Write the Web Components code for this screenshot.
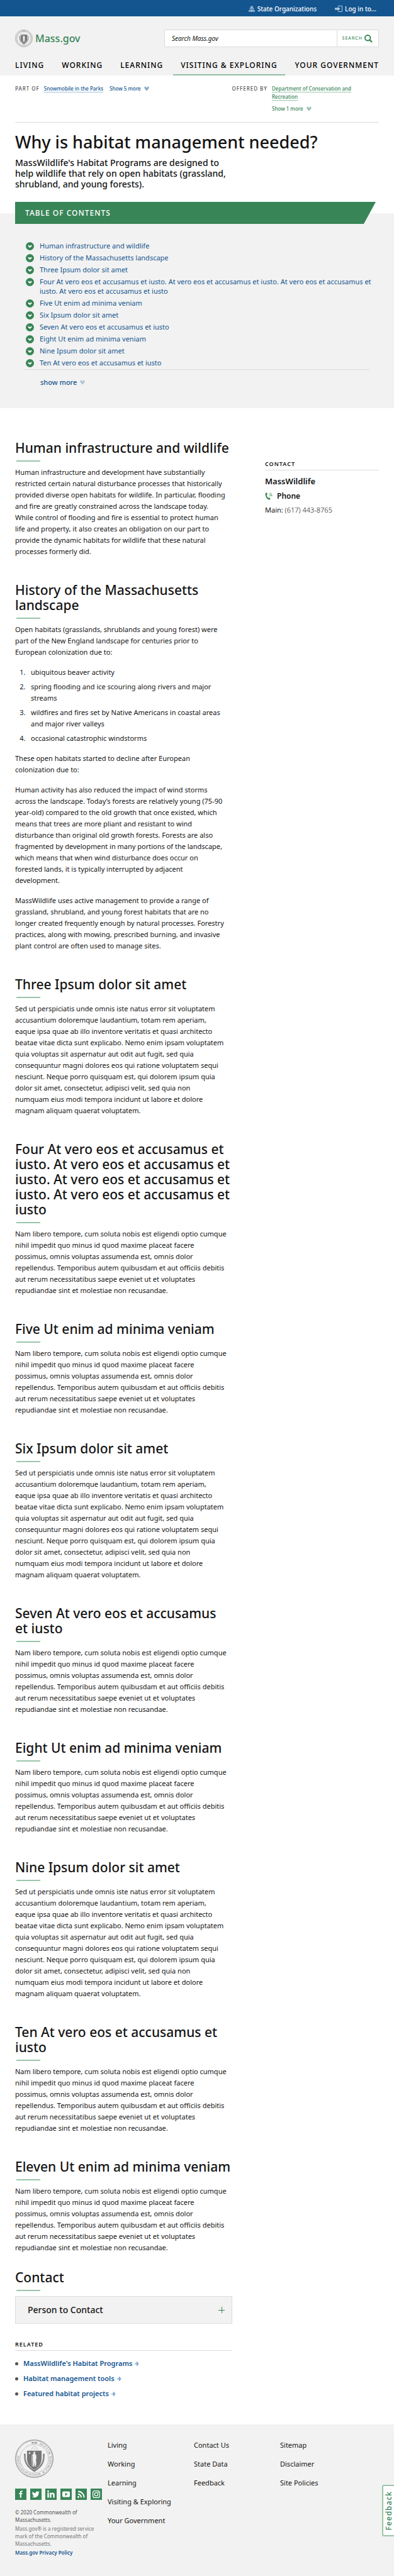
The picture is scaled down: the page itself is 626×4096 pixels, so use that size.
<!DOCTYPE html>
<html lang="en">
<head>
<meta charset="utf-8">
<meta name="viewport" content="width=device-width, initial-scale=1">
<title>Why is habitat management needed? | Mass.gov</title>
<style>
:root {
  --blue: #14558f; --green: #388557; --green-light: #9bc5ab; --ink: #141414;
  --grey: #f2f2f2; --line: #dcdcdc; --muted: #535353; --gutter: 24px;
}
body { display: flex; flex-direction: column; min-height: 100vh; margin: 0; background: #fff; color: var(--ink); font: 11px/18px "Noto Sans", "Open Sans", sans-serif; }
mg-footer { flex: 1; }
p { margin: 0 0 14px; }
p:last-child { margin-bottom: 0; }
ol { margin: 0 0 14px; padding-left: 25px; display: grid; gap: 5px; }
ol li::marker { content: counter(list-item) ".\00a0\00a0\00a0"; }
</style>
</head>
<body>
<mg-topbar></mg-topbar>
<mg-header></mg-header>
<mg-relations></mg-relations>
<mg-page-title>
  Why is habitat management needed?
  <span slot="intro">MassWildlife's Habitat Programs are designed to help wildlife that rely on open habitats (grassland, shrubland, and young forests).</span>
</mg-page-title>
<mg-toc></mg-toc>
<mg-columns>
  <mg-section heading="Human infrastructure and wildlife">
    <p>Human infrastructure and development have substantially restricted certain natural disturbance processes that historically provided diverse open habitats for wildlife. In particular, flooding and fire are greatly constrained across the landscape today. While control of flooding and fire is essential to protect human life and property, it also creates an obligation on our part to provide the dynamic habitats for wildlife that these natural processes formerly did.</p>
  </mg-section>
  <mg-section heading="History of the Massachusetts landscape">
    <p>Open habitats (grasslands, shrublands and young forest) were part of the New England landscape for centuries prior to European colonization due to:</p>
    <ol>
      <li>ubiquitous beaver activity</li>
      <li>spring flooding and ice scouring along rivers and major streams</li>
      <li>wildfires and fires set by Native Americans in coastal areas and major river valleys</li>
      <li>occasional catastrophic windstorms</li>
    </ol>
    <p>These open habitats started to decline after European colonization due to:</p>
    <p>Human activity has also reduced the impact of wind storms across the landscape. Today’s forests are relatively young (75-90 year-old) compared to the old growth that once existed, which means that trees are more pliant and resistant to wind disturbance than original old growth forests. Forests are also fragmented by development in many portions of the landscape, which means that when wind disturbance does occur on forested lands, it is typically interrupted by adjacent development.</p>
    <p>MassWildlife uses active management to provide a range of grassland, shrubland, and young forest habitats that are no longer created frequently enough by natural processes. Forestry practices, along with mowing, prescribed burning, and invasive plant control are often used to manage sites.</p>
  </mg-section>
  <mg-section heading="Three Ipsum dolor sit amet">
    <p>Sed ut perspiciatis unde omnis iste natus error sit voluptatem accusantium doloremque laudantium, totam rem aperiam, eaque ipsa quae ab illo inventore veritatis et quasi architecto beatae vitae dicta sunt explicabo. Nemo enim ipsam voluptatem quia voluptas sit aspernatur aut odit aut fugit, sed quia consequuntur magni dolores eos qui ratione voluptatem sequi nesciunt. Neque porro quisquam est, qui dolorem ipsum quia dolor sit amet, consectetur, adipisci velit, sed quia non numquam&nbsp;eius modi tempora incidunt ut labore et dolore magnam aliquam quaerat voluptatem.</p>
  </mg-section>
  <mg-section heading="Four At vero eos et accusamus et iusto. At vero eos et accusamus et iusto. At vero eos et accusamus et iusto. At vero eos et accusamus et iusto">
    <p>Nam libero tempore, cum soluta nobis est eligendi optio cumque nihil impedit quo minus id quod maxime placeat facere possimus, omnis voluptas assumenda est, omnis dolor repellendus. Temporibus autem quibusdam et aut officiis debitis aut rerum necessitatibus saepe eveniet ut et voluptates repudiandae sint et molestiae non recusandae.</p>
  </mg-section>
  <mg-section heading="Five Ut enim ad minima veniam">
    <p>Nam libero tempore, cum soluta nobis est eligendi optio cumque nihil impedit quo minus id quod maxime placeat facere possimus, omnis voluptas assumenda est, omnis dolor repellendus. Temporibus autem quibusdam et aut officiis debitis aut rerum necessitatibus saepe eveniet ut et voluptates repudiandae sint et molestiae non recusandae.</p>
  </mg-section>
  <mg-section heading="Six Ipsum dolor sit amet">
    <p>Sed ut perspiciatis unde omnis iste natus error sit voluptatem accusantium doloremque laudantium, totam rem aperiam, eaque ipsa quae ab illo inventore veritatis et quasi architecto beatae vitae dicta sunt explicabo. Nemo enim ipsam voluptatem quia voluptas sit aspernatur aut odit aut fugit, sed quia consequuntur magni dolores eos qui ratione voluptatem sequi nesciunt. Neque porro quisquam est, qui dolorem ipsum quia dolor sit amet, consectetur, adipisci velit, sed quia non numquam&nbsp;eius modi tempora incidunt ut labore et dolore magnam aliquam quaerat voluptatem.</p>
  </mg-section>
  <mg-section heading="Seven At vero eos et accusamus et iusto">
    <p>Nam libero tempore, cum soluta nobis est eligendi optio cumque nihil impedit quo minus id quod maxime placeat facere possimus, omnis voluptas assumenda est, omnis dolor repellendus. Temporibus autem quibusdam et aut officiis debitis aut rerum necessitatibus saepe eveniet ut et voluptates repudiandae sint et molestiae non recusandae.</p>
  </mg-section>
  <mg-section heading="Eight Ut enim ad minima veniam">
    <p>Nam libero tempore, cum soluta nobis est eligendi optio cumque nihil impedit quo minus id quod maxime placeat facere possimus, omnis voluptas assumenda est, omnis dolor repellendus. Temporibus autem quibusdam et aut officiis debitis aut rerum necessitatibus saepe eveniet ut et voluptates repudiandae sint et molestiae non recusandae.</p>
  </mg-section>
  <mg-section heading="Nine Ipsum dolor sit amet">
    <p>Sed ut perspiciatis unde omnis iste natus error sit voluptatem accusantium doloremque laudantium, totam rem aperiam, eaque ipsa quae ab illo inventore veritatis et quasi architecto beatae vitae dicta sunt explicabo. Nemo enim ipsam voluptatem quia voluptas sit aspernatur aut odit aut fugit, sed quia consequuntur magni dolores eos qui ratione voluptatem sequi nesciunt. Neque porro quisquam est, qui dolorem ipsum quia dolor sit amet, consectetur, adipisci velit, sed quia non numquam&nbsp;eius modi tempora incidunt ut labore et dolore magnam aliquam quaerat voluptatem.</p>
  </mg-section>
  <mg-section heading="Ten At vero eos et accusamus et iusto">
    <p>Nam libero tempore, cum soluta nobis est eligendi optio cumque nihil impedit quo minus id quod maxime placeat facere possimus, omnis voluptas assumenda est, omnis dolor repellendus. Temporibus autem quibusdam et aut officiis debitis aut rerum necessitatibus saepe eveniet ut et voluptates repudiandae sint et molestiae non recusandae.</p>
  </mg-section>
  <mg-section heading="Eleven Ut enim ad minima veniam">
    <p>Nam libero tempore, cum soluta nobis est eligendi optio cumque nihil impedit quo minus id quod maxime placeat facere possimus, omnis voluptas assumenda est, omnis dolor repellendus. Temporibus autem quibusdam et aut officiis debitis aut rerum necessitatibus saepe eveniet ut et voluptates repudiandae sint et molestiae non recusandae.</p>
  </mg-section>
  <mg-section heading="Contact" compact>
    <mg-accordion>Person to Contact</mg-accordion>
  </mg-section>
  <mg-related></mg-related>
  <mg-contact slot="aside"></mg-contact>
</mg-columns>
<mg-footer></mg-footer>

<script>
const define = (name, html) => {
  const template = document.createElement('template');
  template.innerHTML = `<style>
    * { box-sizing: border-box; }
    a { color: inherit; text-decoration: none; }
    button { font: inherit; color: inherit; background: none; border: 0; padding: 0; margin: 0; cursor: pointer; }
    ul { list-style: none; margin: 0; padding: 0; }
    svg { display: block; flex: none; }
  </style>` + html;
  customElements.define(name, class extends HTMLElement {
    constructor() {
      super();
      this.attachShadow({ mode: 'open' }).append(template.content.cloneNode(true));
      const heading = this.shadowRoot.querySelector('[data-heading]');
      if (heading) heading.textContent = this.getAttribute('heading');
    }
  });
};

const chevron = '<svg width="8" height="8" viewBox="0 0 8 8" fill="currentColor" aria-hidden="true"><path d="M.5 1 2.2.4 4 3 5.800.4 7.500 1V3.200L4 7.800.5 3.200Z"/></svg>';

define('mg-seal', `
<style>
  :host { display: block; color: #777; }
  svg { width: 100%; height: auto; }
  text { font: 8px "Liberation Serif", serif; fill: currentColor; stroke: none; }
  .marks { display: none; }
  :host([small]) text { display: none; }
  :host([small]) .marks { display: inline; }
</style>
<svg viewBox="0 0 100 100" fill="none" stroke="currentColor" role="img" aria-label="Seal of the Commonwealth of Massachusetts">
  <defs><path id="ring" d="M50 10.500A39.500 39.500 0 0 1 50 89.500 39.500 39.500 0 0 1 50 10.500"/></defs>
  <circle cx="50" cy="50" r="49" stroke-width="1.400"/>
  <circle cx="50" cy="50" r="47" stroke-width=".6"/>
  <circle cx="50" cy="50" r="37" stroke-width="1.200" stroke-dasharray="1 .7"/>
  <circle class="marks" cx="50" cy="50" r="42" stroke-width="5" stroke-dasharray="2 1.600" opacity=".6"/>
  <text><textPath href="#ring" startOffset="13">SIGILLUM&#160; REIPUBLICÆ&#160; MASSACHUSETTENSIS.</textPath></text>
  <path d="M41 8.500 47 6.500v4ZM59 8.500 53 6.500v4Z" fill="currentColor" stroke="none"/>
  <circle cx="50" cy="8.500" r="2" stroke-width="1"/>
  <path d="M43 27c1-6 4-10 7-9 4 1 8 4 9 9M47 23l4 2 5-1" stroke-width="1" opacity=".5"/>
  <path d="M31 29H69V50C69 64 60 73 50 79 40 73 31 64 31 50Z" fill="currentColor" stroke="none"/>
  <path d="M25 37C26 45 24 54 30 63 35 73 43 77 50 82 57 77 65 73 70 63 76 54 74 45 75 37" stroke-width="4"/>
  <path d="M25 42C26 50 26 56 31 63 36 71 43 75 50 79.500 57 75 64 71 69 63 74 56 74 50 75 42" stroke="#f2f2f2" stroke-width="1" stroke-dasharray="1 1"/>
  <path d="m37.500 32 .9 2.200 2.300.1-1.800 1.500.7 2.300-2.100-1.300-2 1.300.7-2.300-1.900-1.500 2.400-.1Z" fill="#f2f2f2" stroke="none"/>
  <path d="M48 34c1-3 4-3 4 0v4l3 3v9l-1 3 1 8-1 9h-2l-1-11-2 11h-3l1-10-1-9v-6l-1-5 3-3ZM43 40c2 8 2 20 1 30" fill="#f2f2f2" stroke="#f2f2f2" stroke-width=".5"/>
</svg>`);

define('mg-topbar', `
<style>
  :host { display: block; background: var(--blue); color: #fff; font-size: 10px; line-height: 16px; font-weight: 500; }
  nav { display: flex; justify-content: flex-end; gap: 29px; padding: 6px 28px 4px var(--gutter); }
  button { display: flex; align-items: center; gap: 4px; }
  svg { color: #b3cbe0; }
</style>
<nav aria-label="State">
  <button type="button"><svg width="10" height="10" viewBox="0 0 20 20" fill="currentColor" aria-hidden="true"><path d="M9.300 0h1.400v2C13 2.500 15 4.500 15 7H5c0-2.500 2-4.500 4.300-5ZM3 8h14v1.500H3ZM4 10.500h2v3h2v-3h3v3h2v-3h3v3H4ZM0 14.500h20V20h-1.500v-3h-2v3h-2v-3h-2v3h-5v-3h-2v3h-2v-3h-2v3H0Z"/></svg>State Organizations</button>
  <button type="button"><svg width="12" height="10" viewBox="0 0 24 20" aria-hidden="true"><path d="M10 1H23V19H10" fill="none" stroke="currentColor" stroke-width="2"/><path d="M0 7h9V3l8 7-8 7v-4H0Z" fill="currentColor"/></svg>Log in to...</button>
</nav>`);

define('mg-header', `
<style>
  :host { display: block; background: var(--grey); }
  .brand-row { display: flex; justify-content: space-between; align-items: center; padding: 21px var(--gutter) 0; }
  .brand { display: flex; align-items: center; gap: 4px; color: var(--green); font-size: 16px; line-height: 28px; font-weight: 500; }
  mg-seal { width: 28px; }
  form { display: flex; width: 59%; height: 28px; border: 1px solid var(--line); background: #fff; }
  input { flex: 1; min-width: 0; border: 0; padding: 0 11px; background: none; color: var(--ink); font: italic 10px/16px "Noto Sans", sans-serif; }
  input::placeholder { color: var(--ink); opacity: 1; }
  form button { display: flex; align-items: center; gap: 3px; padding: 0 9px 0 8px; border-left: 1px solid var(--line); color: var(--green); font-size: 7px; font-weight: 500; letter-spacing: 1px; }
  nav ul { display: flex; justify-content: space-between; padding: 21px var(--gutter) 0; font-size: 12px; line-height: 16px; font-weight: 500; letter-spacing: 1px; text-transform: uppercase; color: #000; }
  nav li { position: relative; padding-bottom: 8px; white-space: nowrap; }
  .active::after { content: ""; position: absolute; left: -12px; right: -12px; bottom: 0; height: 2px; background: #92bda3; }
</style>
<header>
  <div class="brand-row">
    <a class="brand" href="#"><mg-seal small></mg-seal>Mass.gov</a>
    <form role="search"><input type="text" placeholder="Search Mass.gov" aria-label="Search Mass.gov"><button type="button">SEARCH<svg width="13" height="13" viewBox="0 0 20 20" fill="none" stroke="currentColor" aria-hidden="true"><circle cx="8" cy="8" r="6.500" stroke-width="3"/><path d="m12.500 12.500 6 6" stroke-width="3.500"/></svg></button></form>
  </div>
  <nav aria-label="Main"><ul>
    <li><a href="#">Living</a></li><li><a href="#">Working</a></li><li><a href="#">Learning</a></li>
    <li class="active"><a href="#">Visiting &amp; Exploring</a></li><li><a href="#">Your Government</a></li>
  </ul></nav>
</header>`);

define('mg-relations', `
<style>
  :host { display: block; padding: 0 var(--gutter); font-size: 8px; line-height: 13px; font-weight: 500; }
  .row { display: flex; justify-content: space-between; padding: 14px 0 15px; border-bottom: 1px solid var(--line); }
  .group { display: flex; gap: 7px; }
  .group > span { letter-spacing: 1px; color: var(--muted); white-space: nowrap; }
  .part { color: var(--blue); display: flex; gap: 10px; }
  .by { color: var(--green); width: 170px; display: grid; gap: 6px; justify-items: start; align-content: start; }
  a { text-decoration: underline; text-decoration-color: var(--rule); text-underline-offset: 2px; text-decoration-thickness: 1px; }
  .part a { --rule: #9fbfdb; }
  .by a { --rule: var(--green-light); padding-right: 28px; }
  button { display: flex; align-items: center; gap: 5px; height: 13px; }
  svg { opacity: .5; }
</style>
<div class="row">
  <div class="group"><span>PART OF</span><div class="part"><a href="#">Snowmobile in the Parks</a><button type="button">Show 5 more ${chevron}</button></div></div>
  <div class="group"><span>OFFERED BY</span><div class="by"><a href="#">Department of Conservation and Recreation</a><button type="button">Show 1 more ${chevron}</button></div></div>
</div>`);

define('mg-page-title', `
<style>
  :host { display: block; padding: 14px var(--gutter) 20px; font-weight: 500; }
  h1 { margin: 0 0 7px; font-size: 27px; line-height: 34px; font-weight: 500; }
  p { margin: 0; max-width: 60%; font-size: 14px; line-height: 17px; }
</style>
<h1><slot></slot></h1><p><slot name="intro"></slot></p>`);

const tocItems = ['Human infrastructure and wildlife', 'History of the Massachusetts landscape', 'Three Ipsum dolor sit amet',
  'Four At vero eos et accusamus et iusto. At vero eos et accusamus et iusto. At vero eos et accusamus et iusto. At vero eos et accusamus et iusto',
  'Five Ut enim ad minima veniam', 'Six Ipsum dolor sit amet', 'Seven At vero eos et accusamus et iusto', 'Eight Ut enim ad minima veniam',
  'Nine Ipsum dolor sit amet', 'Ten At vero eos et accusamus et iusto'];
const dot = '<svg width="13" height="13" viewBox="0 0 26 26" aria-hidden="true"><circle cx="13" cy="13" r="13" fill="#388557"/><path d="m7.500 10.500 2-1.500 3.500 4 3.500-4 2 1.500v3L13 18l-5.500-4.500Z" fill="#fff"/></svg>';
define('mg-toc', `
<style>
  :host { display: block; padding: 0 var(--gutter) 34px; background: linear-gradient(#fff 18px, var(--grey) 18px); color: var(--blue); line-height: 15px; }
  h2 { margin: 0 5px 27px 0; padding-left: 16px; background: var(--green); color: #fff; font-size: 12px; line-height: 35px; font-weight: 500; letter-spacing: 1px; clip-path: polygon(0 0, 100% 0, calc(100% - 19px) 100%, 0 100%); }
  ul { display: grid; gap: 4px; padding-left: 17px; }
  li { display: flex; gap: 9px; }
  li svg { margin-top: 2px; }
  .more { margin: 3px 15px 0; padding: 12px 0 0 25px; border-top: 1px solid var(--line); }
  button { display: flex; align-items: center; gap: 5px; font-weight: 500; }
  button svg { opacity: .3; }
</style>
<h2>TABLE OF CONTENTS</h2>
<ul>${tocItems.map(t => `<li>${dot}<a href="#">${t}</a></li>`).join('')}</ul>
<div class="more"><button type="button">show more ${chevron}</button></div>`);

define('mg-columns', `
<style>
  :host { display: grid; grid-template-columns: 345fr 181fr; column-gap: 52px; padding: 51px var(--gutter) 40px; }
  aside { padding-top: 32px; }
</style>
<main><slot></slot></main><aside><slot name="aside"></slot></aside>`);

define('mg-section', `
<style>
  :host { display: block; margin-bottom: 40px; }
  :host([compact]) { margin: -14px 0 27px; }
  h2 { margin: 0; padding-right: 2px; font-size: 21px; line-height: 24px; font-weight: 500; }
  hr { width: 38px; height: 2px; margin: 8px 0 8px 2px; border: 0; background: var(--green-light); transform: skewX(-30deg); }
  .body { padding-right: 9px; }
  :host([compact]) .body { padding-right: 0; }
</style>
<h2 data-heading></h2><hr><div class="body"><slot></slot></div>`);

define('mg-accordion', `
<style>
  :host { display: block; }
  h3 { margin: 0; }
  button { display: flex; justify-content: space-between; align-items: center; width: 100%; height: 44px; padding: 0 11px 0 19px; border: 1px solid var(--line); background: var(--grey); font-size: 14px; line-height: 18px; font-weight: 500; }
</style>
<h3><button type="button" aria-expanded="false"><slot></slot><svg width="10" height="10" viewBox="0 0 10 10" stroke="#388557" aria-hidden="true"><path d="M0 5.500H10M5.500 0V10"/></svg></button></h3>`);

define('mg-label', `
<style>
  :host { display: block; padding-bottom: 3px; border-bottom: 1px solid var(--line); }
  h2 { margin: 0; font-size: 9px; line-height: 12px; font-weight: 600; letter-spacing: 1px; }
</style><h2><slot></slot></h2>`);

const arrow = '<svg width="7" height="7" viewBox="0 0 14 14" fill="#7fa6c9" aria-hidden="true"><path d="M0 5.500h7L5 2l2-2h1l5 7-5 7H7l-2-2 2-3.500H0Z"/></svg>';
define('mg-related', `
<style>
  :host { display: block; }
  ul { display: grid; gap: 6px; margin-top: 11px; }
  li { display: flex; align-items: center; gap: 8px; font-weight: 600; color: var(--blue); }
  li::before { content: ""; width: 5px; height: 5px; border-radius: 50%; background: var(--muted); }
  a { display: flex; align-items: center; gap: 4px; }
</style>
<mg-label>RELATED</mg-label>
<ul><li><a href="#">MassWildlife's Habitat Programs${arrow}</a></li><li><a href="#">Habitat management tools${arrow}</a></li><li><a href="#">Featured habitat projects${arrow}</a></li></ul>`);

define('mg-contact', `
<style>
  :host { display: block; }
  h3, h4, p { margin: 0; }
  h3 { margin-top: 8px; font-size: 13px; line-height: 18px; font-weight: 600; }
  h4 { display: flex; align-items: center; gap: 7px; margin: 6px 0 5px; font-size: 12px; line-height: 18px; font-weight: 600; }
  p { font-size: 11px; line-height: 16px; }
  a { font-weight: 300; }
</style>
<mg-label>CONTACT</mg-label>
<h3>MassWildlife</h3>
<h4><svg width="12" height="12" viewBox="0 0 20 20" fill="#388557" aria-hidden="true"><path d="M1 4C1 1.500 3 .3 5 .3L6.500 5 4.500 7c.5 3 2 5.500 4.500 7.500l2.500-1L14.500 17C13.500 19.500 10 20 7.500 18 3.500 15 1 9 1 4Z"/><path d="M10 8.500c1 0 2 .8 2 2M11 5c2.500 0 4.500 2 4.500 5M12.500 1.500c3.500.5 6 4 6 8.500" fill="none" stroke="#388557" stroke-width="1.500"/></svg>Phone</h4>
<p>Main: <a href="tel:6174438765">(617) 443-8765</a></p>`);

const social = [
  ['Facebook', '<path d="M10 20V11H7.500V8H10V5.500C10 3 11.500 1.500 14 1.500h2.500v3H15c-1 0-1.500.5-1.500 1.500v2h3l-.5 3h-2.500v9Z" transform="translate(3 4)"/>'],
  ['Twitter', '<path d="M24.500 9.200c-.7.300-1.500.5-2.300.6.800-.5 1.500-1.300 1.800-2.200-.8.500-1.700.8-2.600 1a4.100 4.100 0 0 0-7 3.700c-3.400-.2-6.400-1.800-8.400-4.300-1.100 1.900-.6 4.300 1.300 5.500-.7 0-1.300-.2-1.900-.5 0 2 1.400 3.700 3.300 4.100-.6.200-1.200.2-1.900.1.500 1.600 2.100 2.800 3.900 2.800A8.300 8.300 0 0 1 4.700 21.700c7.700 5 17.800.3 17.800-10.400.8-.6 1.500-1.300 2-2.100Z"/>'],
  ['LinkedIn', '<path d="M5.500 11h4v13h-4ZM12 11h3.800v1.800c2-3.300 8.700-3 8.700 3V24h-4v-7c0-3.500-4.500-3.300-4.500 0v7h-4Z"/><circle cx="7.500" cy="7" r="2.300"/>'],
  ['YouTube', '<path fill-rule="evenodd" d="M8 7.500h14q3 0 3 3v9q0 3-3 3H8q-3 0-3-3v-9q0-3 3-3ZM12.500 11v8l6.500-4Z"/>'],
  ['RSS', '<circle cx="7.500" cy="22" r="2.500"/><path d="M6.500 14.500A9 9 0 0 1 15 24M6.500 7.500A16 16 0 0 1 22.500 24" fill="none" stroke="#fff" stroke-width="3.200"/>'],
  ['Instagram', '<g fill="none" stroke="#fff" stroke-width="2"><rect x="6" y="6" width="18" height="18" rx="5"/><circle cx="15" cy="15" r="4.500"/></g><circle cx="20.300" cy="9.800" r="1.300"/>']
];
define('mg-footer', `
<style>
  :host { display: block; position: relative; background: var(--grey); }
  footer { display: grid; grid-template-columns: 147fr 137fr 137fr 157fr; padding: 24px var(--gutter) 24px; }
  mg-seal { width: 61px; }
  .social { display: flex; gap: 6px; margin: 17px 0 14px; }
  .social a { display: block; background: var(--green); }
  .legal { display: grid; gap: 2px; padding-right: 12px; font-size: 8px; line-height: 12px; color: #777; }
  .legal p { margin: 0; }
  .legal p:first-child { color: var(--muted); }
  .legal a { color: var(--blue); font-weight: 600; }
  .links { display: grid; gap: 12px; align-content: start; }
  .feedback { position: absolute; right: 0; bottom: 63px; width: 19px; height: 82px; border: 2px solid var(--green-light); border-right: 0; border-radius: 3px 0 0 3px; background: #fff; color: var(--green); font-size: 12px; line-height: 17px; font-weight: 500; letter-spacing: 1px; }
  .feedback span { display: block; writing-mode: vertical-rl; transform: rotate(180deg); margin: auto; text-align: center; }
</style>
<footer>
  <div>
    <mg-seal></mg-seal>
    <div class="social">${social.map(([n, d]) => `<a href="#" aria-label="${n}"><svg width="18" height="18" viewBox="0 0 30 30" fill="#fff" aria-hidden="true">${d}</svg></a>`).join('')}</div>
    <div class="legal"><p>© 2020 Commonwealth of Massachusetts.</p><p>Mass.gov® is a registered service mark of the Commonwealth of Massachusetts.</p><a href="#">Mass.gov Privacy Policy</a></div>
  </div>
  <ul class="links"><li><a href="#">Living</a></li><li><a href="#">Working</a></li><li><a href="#">Learning</a></li><li><a href="#">Visiting &amp; Exploring</a></li><li><a href="#">Your Government</a></li></ul>
  <ul class="links"><li><a href="#">Contact Us</a></li><li><a href="#">State Data</a></li><li><a href="#">Feedback</a></li></ul>
  <ul class="links"><li><a href="#">Sitemap</a></li><li><a href="#">Disclaimer</a></li><li><a href="#">Site Policies</a></li></ul>
</footer>
<button type="button" class="feedback"><span>Feedback</span></button>`);
</script>
</body>
</html>
